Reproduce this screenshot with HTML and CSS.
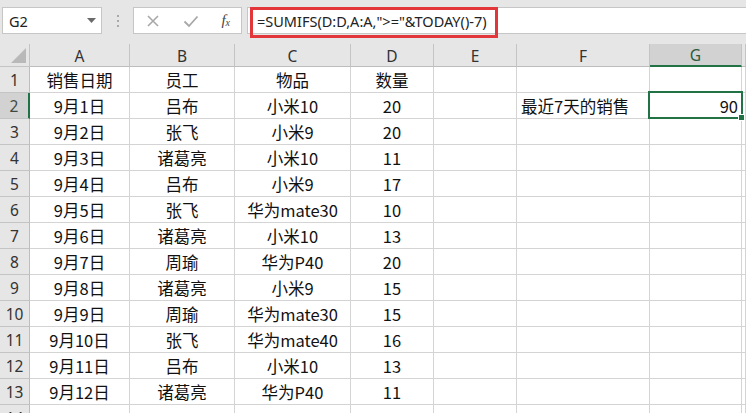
FILE: index.html
```html
<!DOCTYPE html>
<html lang="zh">
<head>
<meta charset="utf-8">
<title>Excel SUMIFS</title>
<link rel="stylesheet" href="styles.css">
</head>
<body>
<div class="topbar">
  <div class="namebox">
    <span class="name">G2</span>
    <svg class="dd" width="9" height="5" viewBox="0 0 9 5"><path d="M0 0H9L4.5 5Z" fill="#6a6a6a"/></svg>
  </div>
  <div class="sep"><i></i><i></i><i></i></div>
  <div class="fxbtns">
    <svg width="14" height="14" viewBox="0 0 14 14"><path d="M2 2L12 12M12 2L2 12" stroke="#a8a8a8" stroke-width="1.6" fill="none"/></svg>
    <svg width="16" height="14" viewBox="0 0 16 14"><path d="M1.5 7.5L6 12L14.5 2.5" stroke="#a8a8a8" stroke-width="1.8" fill="none"/></svg>
    <span class="fx">f<sub>x</sub></span>
  </div>
  <div class="formula"><span class="ftext">=SUMIFS(D:D,A:A,"&gt;="&amp;TODAY()-7)</span></div>
  <div class="redbox"></div>
</div>
<div class="sheet">
  <div class="corner"><svg width="15" height="15" viewBox="0 0 15 15"><path d="M15 0V15H0Z" fill="#b9b9b9"/></svg></div>
  <div class="ch">A</div><div class="ch">B</div><div class="ch">C</div><div class="ch">D</div><div class="ch">E</div><div class="ch">F</div><div class="ch sel">G</div><div class="ch"></div>

  <div class="rh">1</div><div class="c">销售日期</div><div class="c">员工</div><div class="c">物品</div><div class="c">数量</div><div class="c"></div><div class="c"></div><div class="c"></div><div class="c"></div>
  <div class="rh sel">2</div><div class="c">9月1日</div><div class="c">吕布</div><div class="c">小米10</div><div class="c">20</div><div class="c"></div><div class="c l">最近7天的销售</div><div class="c r">90</div><div class="c"></div>
  <div class="rh">3</div><div class="c">9月2日</div><div class="c">张飞</div><div class="c">小米9</div><div class="c">20</div><div class="c"></div><div class="c"></div><div class="c"></div><div class="c"></div>
  <div class="rh">4</div><div class="c">9月3日</div><div class="c">诸葛亮</div><div class="c">小米10</div><div class="c">11</div><div class="c"></div><div class="c"></div><div class="c"></div><div class="c"></div>
  <div class="rh">5</div><div class="c">9月4日</div><div class="c">吕布</div><div class="c">小米9</div><div class="c">17</div><div class="c"></div><div class="c"></div><div class="c"></div><div class="c"></div>
  <div class="rh">6</div><div class="c">9月5日</div><div class="c">张飞</div><div class="c">华为mate30</div><div class="c">10</div><div class="c"></div><div class="c"></div><div class="c"></div><div class="c"></div>
  <div class="rh">7</div><div class="c">9月6日</div><div class="c">诸葛亮</div><div class="c">小米10</div><div class="c">13</div><div class="c"></div><div class="c"></div><div class="c"></div><div class="c"></div>
  <div class="rh">8</div><div class="c">9月7日</div><div class="c">周瑜</div><div class="c">华为P40</div><div class="c">20</div><div class="c"></div><div class="c"></div><div class="c"></div><div class="c"></div>
  <div class="rh">9</div><div class="c">9月8日</div><div class="c">诸葛亮</div><div class="c">小米9</div><div class="c">15</div><div class="c"></div><div class="c"></div><div class="c"></div><div class="c"></div>
  <div class="rh">10</div><div class="c">9月9日</div><div class="c">周瑜</div><div class="c">华为mate30</div><div class="c">15</div><div class="c"></div><div class="c"></div><div class="c"></div><div class="c"></div>
  <div class="rh">11</div><div class="c">9月10日</div><div class="c">张飞</div><div class="c">华为mate40</div><div class="c">16</div><div class="c"></div><div class="c"></div><div class="c"></div><div class="c"></div>
  <div class="rh">12</div><div class="c">9月11日</div><div class="c">吕布</div><div class="c">小米10</div><div class="c">13</div><div class="c"></div><div class="c"></div><div class="c"></div><div class="c"></div>
  <div class="rh">13</div><div class="c">9月12日</div><div class="c">诸葛亮</div><div class="c">华为P40</div><div class="c">11</div><div class="c"></div><div class="c"></div><div class="c"></div><div class="c"></div>
  <div class="rh">14</div><div class="c"></div><div class="c"></div><div class="c"></div><div class="c"></div><div class="c"></div><div class="c"></div><div class="c"></div><div class="c"></div>

  <div class="active"><span class="handle"></span></div>
</div>
</body>
</html>
```

FILE: styles.css
```css
html, body {
  margin: 0;
  padding: 0;
  background: #ffffff;
  overflow: hidden;
}
body {
  width: 746px;
  height: 413px;
  font-family: "Noto Sans CJK SC", "Noto Sans", sans-serif;
  color: #111;
}
.topbar {
  position: relative;
  height: 44px;
  box-sizing: border-box;
  background: #e6e6e6;
  display: flex;
  align-items: flex-start;
  padding: 7px 0 0 2px;
}
.namebox {
  width: 100px;
  height: 27px;
  box-sizing: border-box;
  background: #fff;
  border: 1px solid #c6c6c6;
  display: flex;
  align-items: center;
  justify-content: space-between;
  padding: 0 5px 0 6px;
}
.name {
  font-family: "Noto Sans", sans-serif;
  font-size: 14.5px;
  color: #222;
}
.sep {
  width: 31px;
  height: 27px;
  display: flex;
  flex-direction: column;
  align-items: center;
  justify-content: center;
  gap: 3px;
}
.sep i {
  display: block;
  width: 2px;
  height: 2px;
  background: #a9a9a9;
}
.fxbtns {
  width: 109px;
  height: 27px;
  box-sizing: border-box;
  background: #fff;
  border: 1px solid #c6c6c6;
  display: flex;
  align-items: center;
  justify-content: space-between;
  padding: 0 11px 0 12px;
}
.fx {
  font-family: "Liberation Serif", serif;
  font-style: italic;
  font-size: 15px;
  color: #444;
  line-height: 1;
}
.fx sub {
  font-size: 10px;
  vertical-align: -1px;
}
.formula {
  flex: 1;
  margin-left: 5px;
  margin-right: -4px;
  height: 27px;
  box-sizing: border-box;
  background: #fff;
  border: 1px solid #c6c6c6;
  display: flex;
  align-items: center;
  padding-left: 9px;
}
.ftext {
  font-family: "Noto Sans", sans-serif;
  font-size: 14.5px;
  color: #222;
}
.redbox {
  position: absolute;
  left: 250px;
  top: 7px;
  width: 248px;
  height: 31px;
  box-sizing: border-box;
  border: 3px solid #e2363b;
}
.sheet {
  position: relative;
  display: grid;
  grid-template-columns: 30px 100px 105px 116px 83px 83px 133px 92px 1fr;
  grid-template-rows: 23px repeat(14, 26px);
}
.sheet > div {
  box-sizing: border-box;
}
.corner {
  background: #e6e6e6;
  border-right: 1px solid #c4c4c4;
  border-bottom: 1px solid #c4c4c4;
  display: flex;
  align-items: flex-end;
  justify-content: flex-end;
  padding: 0 3px 3px 0;
}
.ch {
  background: #e6e6e6;
  border-right: 1px solid #c4c4c4;
  border-bottom: 1px solid #bdbdbd;
  display: flex;
  align-items: center;
  justify-content: center;
  font-family: "Noto Sans", sans-serif;
  font-size: 15.5px;
  color: #333;
  padding-top: 1px;
}
.ch.sel {
  background: #d2d2d2;
  border-bottom: 2px solid #217346;
  color: #2b5a3f;
}
.rh {
  background: #e6e6e6;
  border-right: 1px solid #bdbdbd;
  border-bottom: 1px solid #c4c4c4;
  display: flex;
  align-items: center;
  justify-content: center;
  font-family: "Noto Sans", sans-serif;
  font-size: 15.5px;
  color: #333;
}
.rh.sel {
  background: #d2d2d2;
  border-right: 2px solid #217346;
  color: #3d4a42;
}
.c {
  border-right: 1px solid #d4d4d4;
  border-bottom: 1px solid #d4d4d4;
  display: flex;
  align-items: center;
  justify-content: center;
  font-size: 16.5px;
  color: #111;
  white-space: nowrap;
  overflow: hidden;
}
.c.l {
  justify-content: flex-start;
  padding-left: 4px;
}
.c.r {
  justify-content: flex-end;
  padding-right: 3px;
}
.active {
  position: absolute;
  left: 648px;
  top: 47px;
  width: 95px;
  height: 28px;
  box-sizing: border-box;
  border: 2px solid #217346;
}
.handle {
  position: absolute;
  right: -4px;
  bottom: -4px;
  width: 5px;
  height: 5px;
  background: #217346;
  border: 1px solid #fff;
}
```
